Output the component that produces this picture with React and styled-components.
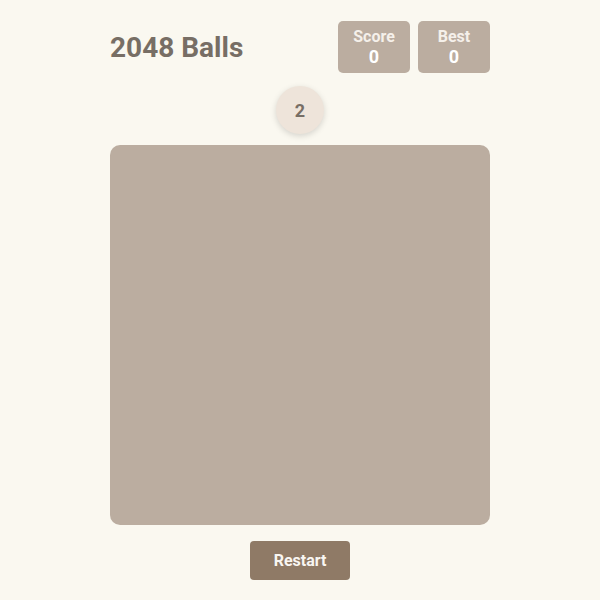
import React from "react";
import styled, { createGlobalStyle } from "styled-components";

const Global = createGlobalStyle`
  html, body { margin: 0; padding: 0; background: #faf8f0; }
  body { font-family: Roboto, "Liberation Sans", sans-serif; }
`;

const Page = styled.div`
  width: 380px;
  margin: 0 auto;
  padding-top: 21px;
  display: flex;
  flex-direction: column;
  align-items: center;
`;

const Header = styled.div`
  width: 100%;
  height: 52px;
  display: flex;
  align-items: center;
  justify-content: space-between;
`;

const Title = styled.h1`
  margin: 0;
  font-size: 28px;
  font-weight: 700;
  color: #776e65;
`;

const Scores = styled.div`
  display: flex;
  gap: 8px;
`;

const ScoreBox = styled.div`
  width: 72px;
  height: 52px;
  background: #bbada0;
  border-radius: 5px;
  display: flex;
  flex-direction: column;
  align-items: center;
  justify-content: center;
  color: #fff;
  font-weight: 700;
`;

const ScoreLabel = styled.div`
  font-size: 16px;
  line-height: 18px;
  color: #f5f0ea;
`;

const ScoreValue = styled.div`
  font-size: 18px;
  line-height: 21px;
`;

const Ball = styled.div`
  margin-top: 13px;
  width: 48px;
  height: 48px;
  border-radius: 50%;
  background: #eee4da;
  box-shadow: 0 2px 6px rgba(0, 0, 0, 0.15);
  display: flex;
  align-items: center;
  justify-content: center;
  color: #776e65;
  font-weight: 700;
  font-size: 18px;
`;

const Board = styled.div`
  margin-top: 11px;
  width: 380px;
  height: 380px;
  background: #bbada0;
  border-radius: 10px;
`;

const Restart = styled.button`
  margin-top: 16px;
  width: 100px;
  height: 39px;
  border: none;
  border-radius: 4px;
  background: #8f7a66;
  color: #f9f6f2;
  font-family: Roboto, "Liberation Sans", sans-serif;
  font-weight: 700;
  font-size: 16px;
  cursor: pointer;
`;

export default function App() {
  return (
    <>
      <Global />
      <Page>
        <Header>
          <Title>2048 Balls</Title>
          <Scores>
            <ScoreBox>
              <ScoreLabel>Score</ScoreLabel>
              <ScoreValue>0</ScoreValue>
            </ScoreBox>
            <ScoreBox>
              <ScoreLabel>Best</ScoreLabel>
              <ScoreValue>0</ScoreValue>
            </ScoreBox>
          </Scores>
        </Header>
        <Ball>2</Ball>
        <Board />
        <Restart>Restart</Restart>
      </Page>
    </>
  );
}
